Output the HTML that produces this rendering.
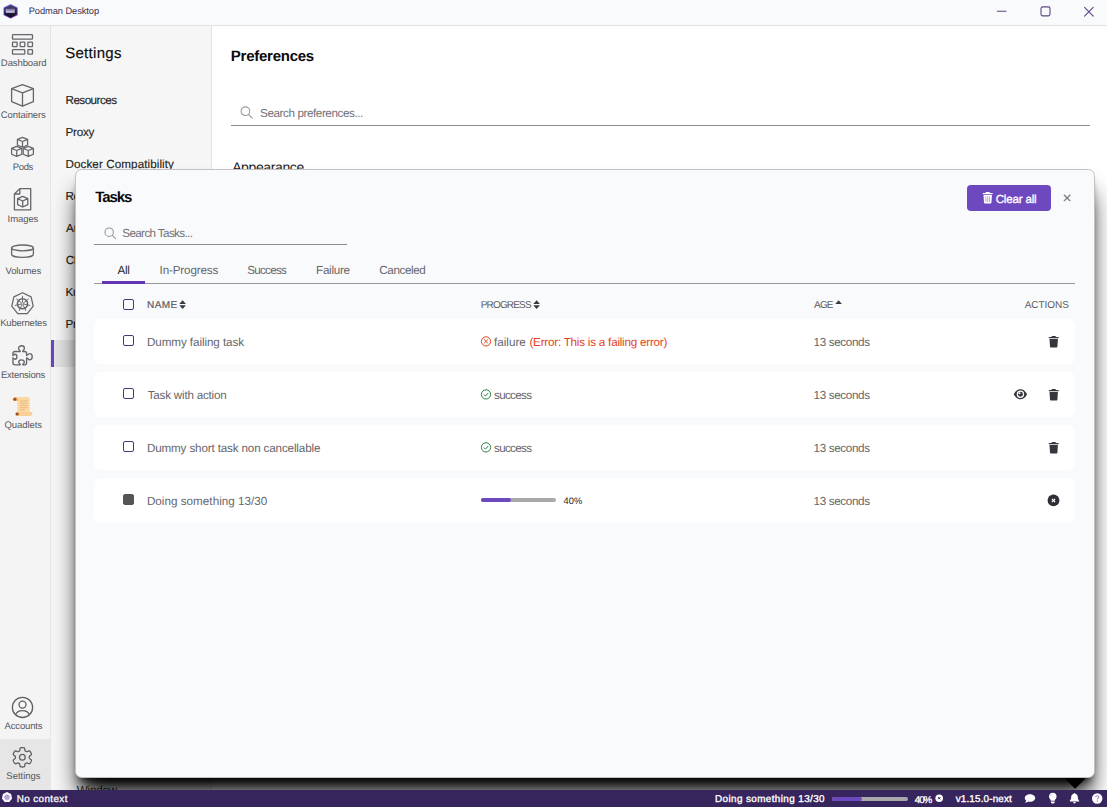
<!DOCTYPE html>
<html lang="en">
<head>
<meta charset="utf-8">
<title>Podman Desktop</title>
<style>
*{box-sizing:border-box;margin:0;padding:0}
html,body{width:1107px;height:807px;overflow:hidden;background:#fff;font-family:"Liberation Sans",sans-serif}
.abs,.t,svg.i{position:absolute}
.t{white-space:nowrap;line-height:1;display:block;text-rendering:geometricPrecision}
#app{position:relative;width:1107px;height:807px;overflow:hidden}
#titlebar{left:0;top:0;width:1107px;height:26px;background:#f9fafb;border-bottom:1px solid #e2e2e4}
#nav{left:0;top:26px;width:51px;height:764px;background:#f4f4f4;border-right:1px solid #e5e5e5}
#navsel{left:0;top:739px;width:50px;height:51px;background:#e6e6e6}
#side{left:51px;top:26px;width:161px;height:764px;background:#f6f6f6;border-right:1px solid #e2e2e2}
#sidesel{left:51px;top:340px;width:160px;height:27px;background:#e4e4e4;border-left:3px solid #6a43c0}
#main{left:212px;top:26px;width:895px;height:764px;background:#fff}
#clip{left:0;top:26px;width:1107px;height:764px;overflow:hidden}
#modal{left:75px;top:169px;width:1020px;height:609px;background:#f9fafb;border:1px solid #c2c2c5;border-radius:6.67px;
 box-shadow:0 20px 25px -5px #000,0 8px 10px -6px #000}
#arrow{left:1065px;top:742px;width:20px;height:20px;overflow:hidden}
.row{left:94px;width:981px;height:45px;background:#fff;border-radius:6.67px}
.cb{width:11px;height:11px;border:1.5px solid #4b367c;border-radius:2px;background:#fff}
#status{left:0;top:790px;width:1107px;height:17px;background:#37255d}
.line{height:1px;background:#8c8c8e}
</style>
</head>
<body>
<div id="app">
<div class="abs" id="main"></div>
<div class="abs" id="side"></div>
<div class="abs" id="sidesel"></div>
<div class="abs" id="nav"></div>
<div class="abs" id="navsel"></div>
<div class="abs" id="titlebar"></div>
<!-- logo -->
<svg class="i" style="left:3px;top:4px" width="16" height="15" viewBox="0 0 16 15">
 <defs><linearGradient id="lg" x1="0" y1="0" x2="0" y2="1"><stop offset="0" stop-color="#54467e"/><stop offset="0.5" stop-color="#2b2247"/><stop offset="1" stop-color="#0b0716"/></linearGradient>
 <linearGradient id="lg2" x1="0" y1="0" x2="1" y2="1"><stop offset="0" stop-color="#5a63ff"/><stop offset="1" stop-color="#a23fe0"/></linearGradient>
 <linearGradient id="lg3" x1="0" y1="0" x2="0" y2="1"><stop offset="0" stop-color="#8f86b8"/><stop offset="1" stop-color="#d9d2f0"/></linearGradient></defs>
 <path d="M7.6 0.5 L14.3 3.7 V10.9 L7.6 14.2 L0.9 10.9 V3.7 Z" fill="url(#lg)" stroke="url(#lg2)" stroke-width="0.7"/>
 <rect x="2.8" y="4.8" width="8.9" height="3.9" rx="0.5" fill="url(#lg3)"/>
 <path d="M4.2 5.8h1.6M6.6 5.8h1.6M9 5.8h1.4" stroke="#4a4070" stroke-width="0.8"/>
</svg>
<!-- window controls -->
<svg class="i" style="left:990px;top:0" width="117" height="25" viewBox="0 0 117 25" fill="none" stroke="#5b4785" stroke-width="1.1" stroke-linecap="round">
 <path d="M7.3 11.2h8.7"/>
 <rect x="51" y="6.9" width="9" height="9" rx="1.6"/>
 <path d="M94.6 7.3l8.6 8.8M103.2 7.3l-8.6 8.8"/>
</svg>
<!-- Dashboard -->
<svg class="i" style="left:11px;top:33px" width="23" height="23" viewBox="0 0 23 23" fill="none" stroke="#66666b" stroke-width="1.3">
 <rect x="1.5" y="1.6" width="20" height="4.6" rx="0.8"/>
 <rect x="1.5" y="9.1" width="4.6" height="4.6" rx="0.6"/><rect x="9.2" y="9.1" width="4.6" height="4.6" rx="0.6"/><rect x="16.9" y="9.1" width="4.6" height="4.6" rx="0.6"/>
 <rect x="1.5" y="16.6" width="12.3" height="4.6" rx="0.8"/><rect x="16.9" y="16.6" width="4.6" height="4.6" rx="0.6"/>
</svg>
<!-- Containers -->
<svg class="i" style="left:10px;top:83px" width="25" height="25" viewBox="0 0 25 25" fill="none" stroke="#66666b" stroke-width="1.3" stroke-linejoin="round">
 <path d="M12.5 1.6 L23.4 5.6 V18.6 L12.5 23.2 L1.6 18.6 V5.6 Z"/>
 <path d="M1.6 5.6 L12.5 9.8 L23.4 5.6 M12.5 9.8 V23.2"/>
</svg>
<!-- Pods -->
<svg class="i" style="left:10px;top:136px" width="25" height="22" viewBox="0 0 25 22" fill="none" stroke="#66666b" stroke-width="1.25" stroke-linejoin="round">
 <path d="M12.5 1.4 L17.6 3.4 V9 L12.5 11.2 L7.4 9 V3.4 Z M7.4 3.4 L12.5 5.5 L17.6 3.4 M12.5 5.5 V11.2"/>
 <path d="M6.7 10.4 L11.8 12.4 V18.2 L6.7 20.4 L1.6 18.2 V12.4 Z M1.6 12.4 L6.7 14.5 L11.8 12.4 M6.7 14.5 V20.4"/>
 <path d="M18.3 10.4 L23.4 12.4 V18.2 L18.3 20.4 L13.2 18.2 V12.4 Z M13.2 12.4 L18.3 14.5 L23.4 12.4 M18.3 14.5 V20.4"/>
</svg>
<!-- Images -->
<svg class="i" style="left:12px;top:187px" width="21" height="25" viewBox="0 0 21 25" fill="none" stroke="#66666b" stroke-width="1.3" stroke-linejoin="round">
 <path d="M7.8 1.6 H18.7 V22.8 H2.4 V7 Z M7.8 1.6 V7 H2.4"/>
 <path d="M10.7 9.4 L15.8 11.6 V17.6 L10.7 20 L5.6 17.6 V11.6 Z M5.6 11.6 L10.7 14 L15.8 11.6 M10.7 14 V20"/>
</svg>
<!-- Volumes -->
<svg class="i" style="left:10px;top:243px" width="25" height="16" viewBox="0 0 25 16" fill="none" stroke="#66666b" stroke-width="1.3">
 <ellipse cx="12.5" cy="4.9" rx="10.9" ry="2.9"/>
 <path d="M1.6 4.6 V11.2 C1.6 13 6.4 14.4 12.5 14.4 C18.6 14.4 23.4 13 23.4 11.2 V4.6"/>
</svg>
<!-- Kubernetes -->
<svg class="i" style="left:10px;top:291px" width="25" height="25" viewBox="0 0 25 25" fill="none" stroke="#66666b" stroke-width="1.25" stroke-linejoin="round">
 <path d="M12.50 1.75 L21.10 5.89 L23.22 15.20 L17.27 22.66 L7.73 22.66 L1.78 15.20 L3.90 5.89 Z"/>
 <circle cx="12.5" cy="12.75" r="5.1" stroke-width="1.5"/>
 <circle cx="12.5" cy="12.75" r="1.2" stroke-width="0.9"/>
 <path d="M12.50 11.15L12.50 4.85M13.75 11.75L18.68 7.82M14.06 13.11L20.20 14.51M13.19 14.19L15.93 19.87M11.81 14.19L9.07 19.87M10.94 13.11L4.80 14.51M11.25 11.75L6.32 7.82" stroke-width="0.95"/>
</svg>
<!-- Extensions -->
<svg class="i" style="left:10px;top:343px" width="25" height="25" viewBox="0 0 25 25" fill="none" stroke="#66666b" stroke-width="1.35" stroke-linejoin="round" stroke-linecap="round">
 <path d="M10.3 8.5 C10.3 7.3 8.6 6.9 8.6 5.3 C8.6 3.7 9.9 2.7 11.5 2.7 C13.1 2.7 14.4 3.7 14.4 5.3 C14.4 6.9 12.7 7.3 12.7 8.5 H14.6 Q16.6 8.5 16.6 10.5 V12.5 C17.8 12.5 18.2 10.6 19.6 10.6 C21.2 10.6 22.2 12 22.2 13.7 C22.2 15.4 21.2 16.8 19.6 16.8 C18.2 16.8 17.8 14.9 16.6 14.9 V19.8 Q16.6 21.8 14.6 21.8 H12.7 C12.7 20.9 14.3 20.6 14.3 19.2 C14.3 17.8 13.1 16.8 11.5 16.8 C9.9 16.8 8.7 17.8 8.7 19.2 C8.7 20.6 10.3 20.9 10.3 21.8 H4.95 Q2.95 21.8 2.95 19.8 V14.9 C3.6 14.9 3.9 16.2 5 16.2 C6.2 16.2 6.9 15.1 6.9 13.7 C6.9 12.3 6.2 11.2 5 11.2 C3.9 11.2 3.6 12.5 2.95 12.5 V10.5 Q2.95 8.5 4.95 8.5 Z"/>
</svg>
<!-- Quadlets (scroll) -->
<svg class="i" style="left:12px;top:396px" width="21" height="21" viewBox="0 0 21 21">
 <path d="M3.4 1 H15.6 C17 1 17.8 2 17.8 3.2 V17 H5.2 V3.6 C5.2 2.2 4.6 1 3.4 1 Z" fill="#fdd8a2"/>
 <path d="M3.4 1 C4.8 1 6 2 6 3.6 V5 H2.4 C1.4 5 0.6 4.2 0.6 3.2 C0.6 2 1.6 1 3.4 1 Z" fill="#f3b870"/>
 <circle cx="2.9" cy="3.2" r="1.5" fill="#9a4f22"/>
 <path d="M5 16 H20.4 V17.6 C20.4 19 19.4 20 18 20 H5.2 C3.8 20 3 19.2 3 18 C3 17 3.8 16 5 16 Z" fill="#f9cf98"/>
 <circle cx="5.2" cy="18" r="1.6" fill="#9a4f22"/>
 <path d="M8 5h7.6M8 7.2h7.6M8 9.4h7.6M8 11.6h7.6M8 13.8h5" stroke="#e3b27a" stroke-width="0.8"/>
</svg>
<!-- Accounts -->
<svg class="i" style="left:10px;top:695px" width="25" height="25" viewBox="0 0 25 25" fill="none" stroke="#5f5f64" stroke-width="1.3">
 <circle cx="12.5" cy="12.4" r="10.1"/>
 <circle cx="12.5" cy="9.6" r="3.5"/>
 <path d="M5.6 19.6 C6.8 16.8 9.4 15.6 12.5 15.6 C15.6 15.6 18.2 16.8 19.4 19.6"/>
</svg>
<!-- Settings gear -->
<svg class="i" style="left:10px;top:745px" width="25" height="25" viewBox="0 0 25 25" fill="none" stroke="#5f5f64" stroke-width="1.3" stroke-linejoin="round">
 <path d="M19.31 12.30 L19.31 12.54 L19.32 12.79 L19.35 13.03 L19.44 13.29 L19.68 13.59 L20.17 13.96 L20.81 14.41 L21.26 14.85 L21.43 15.25 L21.41 15.60 L21.33 15.92 L21.21 16.24 L21.07 16.55 L20.92 16.85 L20.76 17.15 L20.58 17.44 L20.40 17.72 L20.20 17.99 L19.98 18.26 L19.74 18.49 L19.44 18.68 L19.02 18.73 L18.41 18.56 L17.70 18.23 L17.14 17.99 L16.76 17.93 L16.49 17.98 L16.26 18.08 L16.04 18.20 L15.83 18.32 L15.62 18.44 L15.42 18.57 L15.22 18.72 L15.04 18.93 L14.90 19.28 L14.83 19.89 L14.76 20.67 L14.60 21.29 L14.34 21.62 L14.03 21.79 L13.71 21.88 L13.37 21.93 L13.04 21.97 L12.70 21.99 L12.36 22.00 L12.02 21.99 L11.68 21.97 L11.35 21.93 L11.01 21.88 L10.69 21.79 L10.38 21.62 L10.12 21.29 L9.96 20.67 L9.89 19.89 L9.82 19.28 L9.68 18.93 L9.50 18.72 L9.30 18.57 L9.10 18.44 L8.89 18.32 L8.68 18.20 L8.46 18.08 L8.23 17.98 L7.96 17.93 L7.58 17.99 L7.02 18.23 L6.31 18.56 L5.70 18.73 L5.28 18.68 L4.98 18.49 L4.74 18.26 L4.52 17.99 L4.32 17.72 L4.14 17.44 L3.96 17.15 L3.80 16.85 L3.65 16.55 L3.51 16.24 L3.39 15.92 L3.31 15.60 L3.29 15.25 L3.46 14.85 L3.91 14.41 L4.55 13.96 L5.04 13.59 L5.28 13.29 L5.37 13.03 L5.40 12.79 L5.41 12.54 L5.41 12.30 L5.41 12.06 L5.40 11.81 L5.37 11.57 L5.28 11.31 L5.04 11.01 L4.55 10.64 L3.91 10.19 L3.46 9.75 L3.29 9.35 L3.31 9.00 L3.39 8.68 L3.51 8.36 L3.65 8.05 L3.80 7.75 L3.96 7.45 L4.14 7.16 L4.32 6.88 L4.52 6.61 L4.74 6.34 L4.98 6.11 L5.28 5.92 L5.70 5.87 L6.31 6.04 L7.02 6.37 L7.58 6.61 L7.96 6.67 L8.23 6.62 L8.46 6.52 L8.68 6.40 L8.89 6.28 L9.10 6.16 L9.30 6.03 L9.50 5.88 L9.68 5.67 L9.82 5.32 L9.89 4.71 L9.96 3.93 L10.12 3.31 L10.38 2.98 L10.69 2.81 L11.01 2.72 L11.35 2.67 L11.68 2.63 L12.02 2.61 L12.36 2.60 L12.70 2.61 L13.04 2.63 L13.37 2.67 L13.71 2.72 L14.03 2.81 L14.34 2.98 L14.60 3.31 L14.76 3.93 L14.83 4.71 L14.90 5.32 L15.04 5.67 L15.22 5.88 L15.42 6.03 L15.62 6.16 L15.83 6.28 L16.04 6.40 L16.26 6.52 L16.49 6.62 L16.76 6.67 L17.14 6.61 L17.70 6.37 L18.41 6.04 L19.02 5.87 L19.44 5.92 L19.74 6.11 L19.98 6.34 L20.20 6.61 L20.40 6.88 L20.58 7.16 L20.76 7.45 L20.92 7.75 L21.07 8.05 L21.21 8.36 L21.33 8.68 L21.41 9.00 L21.43 9.35 L21.26 9.75 L20.81 10.19 L20.17 10.64 L19.68 11.01 L19.44 11.31 L19.35 11.57 L19.32 11.81 L19.31 12.06 Z"/>
 <circle cx="12.36" cy="12.3" r="2.85"/>
</svg>
<!-- search icon main -->
<svg class="i" style="left:239px;top:105px" width="15" height="15" viewBox="0 0 15 15" fill="none" stroke="#9a9aa0" stroke-width="1.1" stroke-linecap="round">
 <circle cx="6.4" cy="6.2" r="4.3"/><path d="M9.6 9.5L13.2 13.1"/>
</svg>

<div class="abs line" style="left:231px;top:125px;width:859px"></div>
<span class="t" style="left:28.66px;top:7px;color:#382e52;font-size:9.3px;letter-spacing:-0.066px;">Podman Desktop</span>
<span class="t" style="left:0.86px;top:59px;color:#57575e;font-size:9.5px;letter-spacing:-0.092px;">Dashboard</span>
<span class="t" style="left:0.86px;top:111px;color:#57575e;font-size:9.5px;letter-spacing:-0.105px;">Containers</span>
<span class="t" style="left:12.87px;top:163px;color:#57575e;font-size:9.5px;letter-spacing:-0.387px;">Pods</span>
<span class="t" style="left:7.59px;top:215px;color:#57575e;font-size:9.5px;letter-spacing:-0.075px;">Images</span>
<span class="t" style="left:5.54px;top:267px;color:#57575e;font-size:9.5px;letter-spacing:-0.138px;">Volumes</span>
<span class="t" style="left:0.26px;top:319px;color:#57575e;font-size:9.5px;letter-spacing:-0.216px;">Kubernetes</span>
<span class="t" style="left:1.01px;top:371px;color:#57575e;font-size:9.5px;letter-spacing:-0.249px;">Extensions</span>
<span class="t" style="left:4.52px;top:421px;color:#57575e;font-size:9.5px;letter-spacing:-0.086px;">Quadlets</span>
<span class="t" style="left:4.49px;top:722px;color:#57575e;font-size:9.5px;letter-spacing:-0.139px;">Accounts</span>
<span class="t" style="left:6.37px;top:772px;color:#57575e;font-size:9.5px;letter-spacing:-0.021px;">Settings</span>
<span class="t" style="left:65.17px;top:46px;color:#0c0c0f;font-size:15px;-webkit-text-stroke:0.15px currentColor;letter-spacing:0.301px;">Settings</span>
<span class="t" style="left:65.49px;top:95px;color:#1f1f23;font-size:11.67px;-webkit-text-stroke:0.15px currentColor;letter-spacing:-0.525px;">Resources</span>
<span class="t" style="left:65.48px;top:127px;color:#1f1f23;font-size:11.67px;-webkit-text-stroke:0.15px currentColor;letter-spacing:-0.208px;">Proxy</span>
<span class="t" style="left:65.48px;top:159px;color:#1f1f23;font-size:11.67px;-webkit-text-stroke:0.15px currentColor;letter-spacing:0.083px;">Docker Compatibility</span>
<span class="t" style="left:65.49px;top:191px;color:#1f1f23;font-size:11.67px;-webkit-text-stroke:0.15px currentColor;letter-spacing:-0.467px;">Registries</span>
<span class="t" style="left:66.07px;top:223px;color:#1f1f23;font-size:11.67px;-webkit-text-stroke:0.15px currentColor;letter-spacing:-0.167px;">Authentication</span>
<span class="t" style="left:65.71px;top:255px;color:#1f1f23;font-size:11.67px;-webkit-text-stroke:0.15px currentColor;letter-spacing:-0.459px;">CLI Tools</span>
<span class="t" style="left:65.49px;top:287px;color:#1f1f23;font-size:11.67px;-webkit-text-stroke:0.15px currentColor;letter-spacing:-0.332px;">Kubernetes</span>
<span class="t" style="left:65.48px;top:319px;color:#1f1f23;font-size:11.67px;-webkit-text-stroke:0.15px currentColor;letter-spacing:-0.316px;">Preferences</span>
<span class="t" style="left:76.76px;top:785px;color:#1f1f23;font-size:11.67px;font-weight:500;letter-spacing:-0.231px;">Window</span>
<span class="t" style="left:230.87px;top:49px;color:#0a0a0c;font-size:15px;font-weight:700;letter-spacing:-0.260px;">Preferences</span>
<span class="t" style="left:260.10px;top:108px;color:#717176;font-size:11.67px;letter-spacing:-0.411px;">Search preferences...</span>
<span class="t" style="left:232.18px;top:160px;color:#1a1a1e;font-size:14px;font-weight:500;letter-spacing:-0.385px;">Appearance</span>
<div class="abs" id="clip" style="top:0;height:790px">
 <div class="abs" style="left:1064px;top:778px;width:22px;height:11px;overflow:hidden"><div class="abs" style="left:3.9px;top:-6.3px;width:14.2px;height:14.2px;background:#000;transform:rotate(45deg)"></div></div>
 <div class="abs" id="modal"></div>
 <div class="abs line" style="left:94px;top:244px;width:253px"></div>
 <div class="abs line" style="left:94px;top:283px;width:981px;background:#98989b"></div>
 <div class="abs" style="left:102px;top:281px;width:43px;height:3px;background:#6234b1"></div>
 <div class="abs row" style="top:319px"></div>
 <div class="abs row" style="top:372px"></div>
 <div class="abs row" style="top:425px"></div>
 <div class="abs row" style="top:478px"></div>
 <div class="abs cb" style="left:123px;top:299px;background:transparent"></div>
 <div class="abs cb" style="left:123px;top:335px"></div>
 <div class="abs cb" style="left:123px;top:388px"></div>
 <div class="abs cb" style="left:123px;top:441px"></div>
 <div class="abs cb" style="left:123px;top:494px;background:#555558;border-color:#555558"></div>
 <div class="abs" style="left:481px;top:498px;width:75px;height:4px;border-radius:2px;background:#a9a9ab"></div>
 <div class="abs" style="left:481px;top:498px;width:30px;height:4px;border-radius:2px;background:#6d48bf"></div>
 <div class="abs" style="left:967px;top:185px;width:84px;height:26px;border-radius:4px;background:#6d48bf"></div>
<!-- search icon -->
<svg class="i" style="left:103px;top:226px" width="15" height="15" viewBox="0 0 15 15" fill="none" stroke="#9a9aa0" stroke-width="1.1" stroke-linecap="round">
 <circle cx="6.2" cy="6.2" r="4.2"/><path d="M9.3 9.4L12.6 12.7"/>
</svg>
<!-- sort arrows -->
<svg class="i" style="left:179.1px;top:299.7px" width="8" height="10" viewBox="0 0 8 10" fill="#38383d"><path d="M0.3 4 L3.6 0.3 L6.9 4 Z M0.3 5.3 L3.6 9 L6.9 5.3 Z"/></svg>
<svg class="i" style="left:533.2px;top:299.7px" width="8" height="10" viewBox="0 0 8 10" fill="#38383d"><path d="M0.3 4 L3.6 0.3 L6.9 4 Z M0.3 5.3 L3.6 9 L6.9 5.3 Z"/></svg>
<svg class="i" style="left:835.1px;top:299.7px" width="8" height="10" viewBox="0 0 8 10" fill="#38383d"><path d="M0.3 4 L3.6 0.3 L6.9 4 Z"/></svg>
<!-- status icons -->
<svg class="i" style="left:480px;top:335px" width="12" height="12" viewBox="0 0 12 12" fill="none" stroke="#e5421d" stroke-width="1"><circle cx="6" cy="6.4" r="4.6"/><path d="M4.2 4.6l3.6 3.6M7.8 4.6L4.2 8.2"/></svg>
<svg class="i" style="left:480px;top:388px" width="12" height="12" viewBox="0 0 12 12" fill="none" stroke="#2f7d48" stroke-width="1"><circle cx="6" cy="6.4" r="4.6"/><path d="M3.9 6.5l1.5 1.6L8.2 5"/></svg>
<svg class="i" style="left:480px;top:441px" width="12" height="12" viewBox="0 0 12 12" fill="none" stroke="#2f7d48" stroke-width="1"><circle cx="6" cy="6.4" r="4.6"/><path d="M3.9 6.5l1.5 1.6L8.2 5"/></svg>
<!-- trash icons -->
<svg class="i" style="left:1048px;top:335px" width="12" height="13" viewBox="0 0 12 13" fill="#36363d"><path d="M4 1.1 H7.4 L8 2 H10.6 V3.3 H0.8 V2 H3.4 Z M1.5 4.1 H9.9 L9.4 11.5 C9.35 12.1 8.9 12.5 8.3 12.5 H3.1 C2.5 12.5 2.05 12.1 2 11.5 Z"/></svg>
<svg class="i" style="left:1048px;top:388px" width="12" height="13" viewBox="0 0 12 13" fill="#36363d"><path d="M4 1.1 H7.4 L8 2 H10.6 V3.3 H0.8 V2 H3.4 Z M1.5 4.1 H9.9 L9.4 11.5 C9.35 12.1 8.9 12.5 8.3 12.5 H3.1 C2.5 12.5 2.05 12.1 2 11.5 Z"/></svg>
<svg class="i" style="left:1048px;top:441px" width="12" height="13" viewBox="0 0 12 13" fill="#36363d"><path d="M4 1.1 H7.4 L8 2 H10.6 V3.3 H0.8 V2 H3.4 Z M1.5 4.1 H9.9 L9.4 11.5 C9.35 12.1 8.9 12.5 8.3 12.5 H3.1 C2.5 12.5 2.05 12.1 2 11.5 Z"/></svg>
<!-- eye -->
<svg class="i" style="left:1013.1px;top:388.3px" width="15.2" height="12.35" viewBox="0 0 16 13"><path d="M0.8 6.6 C2.4 3.2 4.9 1.3 7.8 1.3 C10.7 1.3 13.2 3.2 14.8 6.6 C13.2 10 10.7 11.9 7.8 11.9 C4.9 11.9 2.4 10 0.8 6.6 Z" fill="#36363d"/><circle cx="7.8" cy="6.6" r="3.9" fill="#fff"/><circle cx="7.8" cy="6.6" r="2.6" fill="#36363d"/><circle cx="6.8" cy="5.6" r="1.1" fill="#fff"/></svg>
<!-- cancel -->
<svg class="i" style="left:1047px;top:494px" width="13" height="13" viewBox="0 0 13 13"><circle cx="6.5" cy="6.4" r="5.9" fill="#2e2e35"/><path d="M4.9 4.8l3.2 3.2M8.1 4.8L4.9 8" stroke="#fff" stroke-width="1.2"/></svg>
<!-- button trash -->
<svg class="i" style="left:982px;top:191px" width="12" height="13" viewBox="0 0 12 13" fill="#fff"><path d="M4 1.1 H7.4 L8 2 H10.6 V3.3 H0.8 V2 H3.4 Z M1.5 4.1 H9.9 L9.4 11.5 C9.35 12.1 8.9 12.5 8.3 12.5 H3.1 C2.5 12.5 2.05 12.1 2 11.5 Z"/><path d="M3.9 5.4v5.6M5.7 5.4v5.6M7.5 5.4v5.6" stroke="#9f85d6" stroke-width="0.7"/></svg>
<!-- close -->
<svg class="i" style="left:1062px;top:193px" width="10" height="10" viewBox="0 0 10 10" fill="none" stroke="#7a7a7e" stroke-width="1.3"><path d="M1.9 1.7l6.4 6.4M8.3 1.7l-6.4 6.4"/></svg>

<span class="t" style="left:95.15px;top:190px;color:#0a0a0c;font-size:15px;font-weight:700;letter-spacing:-1.025px;">Tasks</span>
<span class="t" style="left:122.28px;top:228px;color:#717176;font-size:11.67px;letter-spacing:-0.627px;">Search Tasks...</span>
<span class="t" style="left:117.60px;top:265px;color:#2a2a30;font-size:11.67px;letter-spacing:-0.330px;">All</span>
<span class="t" style="left:159.55px;top:265px;color:#66666a;font-size:11.67px;letter-spacing:-0.147px;">In-Progress</span>
<span class="t" style="left:247.30px;top:265px;color:#66666a;font-size:11.67px;letter-spacing:-0.758px;">Success</span>
<span class="t" style="left:316.08px;top:265px;color:#66666a;font-size:11.67px;letter-spacing:-0.279px;">Failure</span>
<span class="t" style="left:379.34px;top:265px;color:#66666a;font-size:11.67px;letter-spacing:-0.411px;">Canceled</span>
<span class="t" style="left:147.11px;top:301px;color:#5c5c61;font-size:10px;-webkit-text-stroke:0.2px currentColor;letter-spacing:0.378px;">NAME</span>
<span class="t" style="left:480.72px;top:301px;color:#5c5c61;font-size:10px;letter-spacing:-0.836px;">PROGRESS</span>
<span class="t" style="left:814.10px;top:301px;color:#5c5c61;font-size:10px;letter-spacing:-0.867px;">AGE</span>
<span class="t" style="left:1024.67px;top:301px;color:#5c5c61;font-size:10px;letter-spacing:-0.039px;">ACTIONS</span>
<span class="t" style="left:146.92px;top:337px;color:#66666a;font-size:11.67px;letter-spacing:-0.076px;">Dummy failing task</span>
<span class="t" style="left:813.50px;top:337px;color:#66666a;font-size:11.67px;letter-spacing:-0.348px;">13 seconds</span>
<span class="t" style="left:147.67px;top:390px;color:#66666a;font-size:11.67px;letter-spacing:-0.213px;">Task with action</span>
<span class="t" style="left:813.50px;top:390px;color:#66666a;font-size:11.67px;letter-spacing:-0.348px;">13 seconds</span>
<span class="t" style="left:146.92px;top:443px;color:#66666a;font-size:11.67px;letter-spacing:-0.151px;">Dummy short task non cancellable</span>
<span class="t" style="left:813.50px;top:443px;color:#66666a;font-size:11.67px;letter-spacing:-0.348px;">13 seconds</span>
<span class="t" style="left:146.88px;top:496px;color:#66666a;font-size:11.67px;letter-spacing:0.029px;">Doing something 13/30</span>
<span class="t" style="left:813.50px;top:496px;color:#66666a;font-size:11.67px;letter-spacing:-0.348px;">13 seconds</span>
<span class="t" style="left:494.04px;top:337px;color:#66666a;font-size:11.67px;letter-spacing:0.007px;">failure</span>
<span class="t" style="left:529.45px;top:337px;color:#e5421d;font-size:11.67px;letter-spacing:-0.223px;">(Error: This is a failing error)</span>
<span class="t" style="left:493.99px;top:390px;color:#66666a;font-size:11.67px;letter-spacing:-0.676px;">success</span>
<span class="t" style="left:493.99px;top:443px;color:#66666a;font-size:11.67px;letter-spacing:-0.676px;">success</span>
<span class="t" style="left:563.42px;top:497px;color:#222226;font-size:9.3px;letter-spacing:0.151px;">40%</span>
<span class="t" style="left:995.68px;top:194px;color:#ffffff;font-size:11.67px;-webkit-text-stroke:0.3px currentColor;letter-spacing:-0.220px;">Clear all</span>
</div>
<div class="abs" id="status"></div>
<div class="abs" style="left:832px;top:797px;width:76px;height:4px;border-radius:2px;background:#a9a9ab"></div>
<div class="abs" style="left:832px;top:797px;width:30px;height:4px;border-radius:2px;background:#6d48bf"></div>
<!-- kube small -->
<svg class="i" style="left:1.2px;top:791.3px" width="12" height="12" viewBox="0 0 13 13"><path d="M6.5 1.2 L10.9 3.3 L12 8.1 L9 11.9 H4 L1 8.1 L2.1 3.3 Z" fill="#fff"/><circle cx="6.5" cy="6.8" r="2.2" fill="none" stroke="#7d6bc4" stroke-width="0.8"/><path d="M6.5 3.2v7.2M3 5.8l7 2M10 5.8L3 7.8M4.4 9.8l4.2-6M8.6 9.8l-4.2-6" stroke="#a58bd0" stroke-width="0.55"/></svg>
<!-- cancel small -->
<svg class="i" style="left:935px;top:794px" width="9" height="9" viewBox="0 0 9 9"><circle cx="4.2" cy="4.2" r="3.8" fill="#fff"/><path d="M3.1 3.1l2.2 2.2M5.3 3.1L3.1 5.3" stroke="#37255d" stroke-width="1"/></svg>
<!-- comment -->
<svg class="i" style="left:1024px;top:793px" width="12" height="11" viewBox="0 0 12 11"><path d="M6 1.2 C8.9 1.2 11.2 2.9 11.2 5 C11.2 7.1 8.9 8.8 6 8.8 C5.4 8.8 4.8 8.7 4.3 8.6 C3.5 9.3 2.3 9.8 1 9.8 C1.7 9.1 2.1 8.3 2.2 7.6 C1.3 6.9 0.8 6 0.8 5 C0.8 2.9 3.1 1.2 6 1.2 Z" fill="#fff"/></svg>
<!-- lightbulb -->
<svg class="i" style="left:1048px;top:792px" width="10" height="12" viewBox="0 0 10 12"><path d="M4.8 0.8 C7 0.8 8.6 2.4 8.6 4.4 C8.6 5.6 8 6.4 7.4 7.2 C7 7.7 6.8 8.2 6.8 8.8 H2.8 C2.8 8.2 2.6 7.7 2.2 7.2 C1.6 6.4 1 5.6 1 4.4 C1 2.4 2.6 0.8 4.8 0.8 Z M2.9 9.4 H6.7 V10.2 C6.7 10.9 6.2 11.4 5.5 11.4 H4.1 C3.4 11.4 2.9 10.9 2.9 10.2 Z" fill="#fff"/><path d="M2.6 4.2 C2.6 3.1 3.5 2.3 4.6 2.3" stroke="#b9a6e6" stroke-width="0.6" fill="none"/></svg>
<!-- bell -->
<svg class="i" style="left:1069px;top:792px" width="11" height="12" viewBox="0 0 11 12"><path d="M5.5 0.9 C6 0.9 6.3 1.2 6.3 1.7 C7.9 2.1 8.8 3.4 8.8 5.1 C8.8 6.9 9.3 8 10.2 8.8 V9.5 H0.8 V8.8 C1.7 8 2.2 6.9 2.2 5.1 C2.2 3.4 3.1 2.1 4.7 1.7 C4.7 1.2 5 0.9 5.5 0.9 Z M4.2 10.1 H6.8 C6.8 10.8 6.2 11.4 5.5 11.4 C4.8 11.4 4.2 10.8 4.2 10.1 Z" fill="#fff"/></svg>
<!-- help -->
<svg class="i" style="left:1091px;top:792px" width="12" height="12" viewBox="0 0 12 12"><circle cx="6.2" cy="6.5" r="5.2" fill="#fff"/><path d="M4.6 5.2 C4.6 4.2 5.3 3.7 6.2 3.7 C7.1 3.7 7.8 4.3 7.8 5.1 C7.8 6.2 6.3 6.2 6.3 7.4" stroke="#a98ad0" stroke-width="1.1" fill="none"/><circle cx="6.3" cy="9" r="0.7" fill="#a98ad0"/></svg>

<span class="t" style="left:16.81px;top:795px;color:#ffffff;font-size:9.9px;-webkit-text-stroke:0.28px currentColor;letter-spacing:0.380px;">No context</span>
<span class="t" style="left:715.02px;top:795px;color:#ffffff;font-size:9.9px;-webkit-text-stroke:0.35px currentColor;letter-spacing:0.400px;">Doing something 13/30</span>
<span class="t" style="left:914.80px;top:796px;color:#ffffff;font-size:9.8px;-webkit-text-stroke:0.3px currentColor;letter-spacing:-1.103px;">40%</span>
<span class="t" style="left:955.74px;top:795px;color:#ffffff;font-size:9.9px;-webkit-text-stroke:0.35px currentColor;letter-spacing:0.153px;">v1.15.0-next</span>
</div>
</body>
</html>
